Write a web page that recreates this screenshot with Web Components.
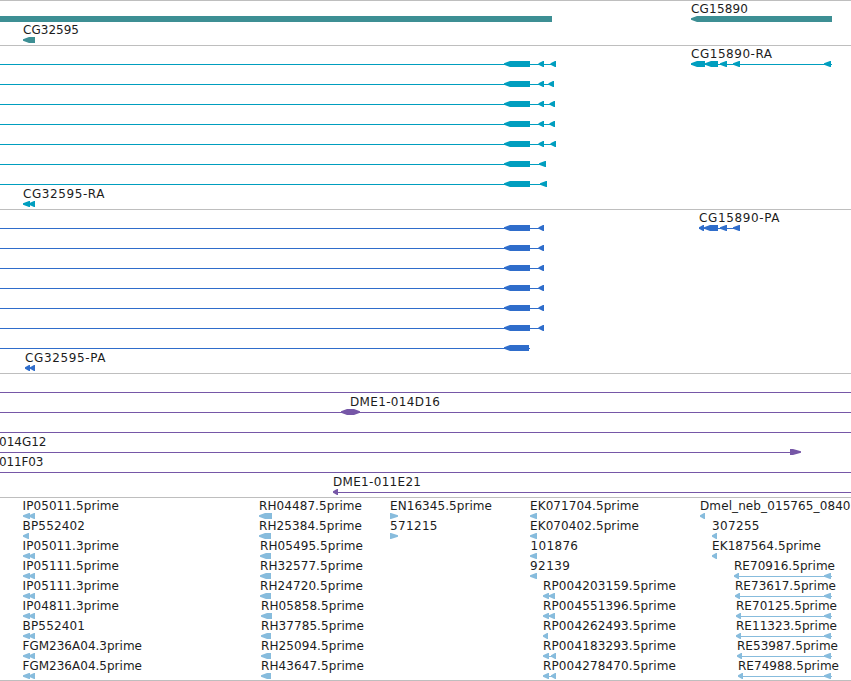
<!DOCTYPE html>
<html lang="en">
<head>
<meta charset="utf-8">
<title>Genome browser</title>
<style>
    html, body {
        margin: 0;
        background: #fff;
        overflow: hidden;
    }
</style>
</head>
<body>
<genome-view></genome-view>

<script>
const SVG = "http://www.w3.org/2000/svg";

// bar box inside a row: top, bottom, and the middle of the blunt arrow tip
const TOP = 13;
const BOTTOM = 19;
const TIP = 16;
const BLUNT = 0.8;

// label: [x, right edge, text]
// line:  [from, to]
// exon:  [from, to, direction], direction is "l" by default, "r", "b" (both) or "n" (none)
function repeat(n, row) {
    return Array.from({length: n}, () => row);
}

function rnaRow(...last) {
    return {lines: [[0, last[last.length - 1][0] + 2]], exons: [[504, 530], ...last]};
}

const pair = [[23, 30], [29, 35]];

function estRow(...parts) {
    let row = {labels: [], lines: [], exons: []};
    parts.forEach((p) => {
        row.labels.push(p.label);
        row.exons.push(...p.exons);
        if(p.line) row.lines.push(p.line);
    });
    return row;
}

function est(x, right, text, exons, line) {
    return {label: [x, right, text], exons, line};
}

function re(x, text) {
    return est(x, x + 101, text, [[x, x + 5], [824, 831]], [x + 1, 832]);
}

const tracks = [
    {color: "#3d8f94", rows: [
        {height: 21, labels: [[691, 748, "CG15890"]], exons: [[0, 552, "n"], [691, 832]]},
        {labels: [[23, 79, "CG32595"]], exons: [[23, 35]]}
    ]},
    {color: "#009ebf", rows: [
        {
            labels: [[691, 772, "CG15890-RA"]],
            lines: [[0, 552], [691, 832]],
            exons: [[504, 530], [538.5, 544], [550.5, 556], [691, 705], [705, 718], [720, 727], [733, 740], [824, 831]]
        },
        rnaRow([538.5, 544], [548.5, 554]),
        rnaRow([538.5, 544], [549.5, 555]),
        rnaRow([538.5, 544], [549.5, 555]),
        rnaRow([538.5, 544], [550.5, 556]),
        rnaRow([539, 546]),
        rnaRow([540, 547]),
        {labels: [[23, 104.5, "CG32595-RA"]], exons: pair}
    ]},
    {color: "#2f6dcb", rows: [
        {
            labels: [[699, 779.5, "CG15890-PA"]],
            lines: [[0, 541], [699, 740]],
            exons: [[504, 530], [538.5, 544], [699, 704], [704, 718], [720, 727], [733, 740]]
        },
        ...repeat(5, rnaRow([538.5, 544])),
        {lines: [[0, 530]], exons: [[504, 529]]},
        {labels: [[25, 105.5, "CG32595-PA"]], exons: [[25, 30], [30, 35]]}
    ]},
    {color: "#7657a7", rows: [
        {lines: [[0, 851]]},
        {labels: [[350, 440, "DME1-014D16"]], lines: [[0, 851]], exons: [[341, 360, "b"]]},
        {lines: [[0, 851]]},
        {labels: [[-1, 46.5, "014G12"]], lines: [[0, 791]], exons: [[790, 801, "r"]]},
        {labels: [[-1, 43.5, "011F03"]], lines: [[0, 851]]},
        {labels: [[333, 421, "DME1-011E21"]], lines: [[335, 851]], exons: [[333, 338]]}
    ]},
    {color: "#87bcdd", rows: [
        estRow(
            est(22.5, 119, "IP05011.5prime", pair),
            est(259, 362, "RH04487.5prime", [[259, 272]]),
            est(390, 492, "EN16345.5prime", [[390, 398, "r"]]),
            est(530, 639, "EK071704.5prime", [[530, 537]]),
            est(700, 850.5, "Dmel_neb_015765_0840", [[700, 705]])
        ),
        estRow(
            est(22.5, 85, "BP552402", [[23, 29]]),
            est(259, 362, "RH25384.5prime", [[259, 271]]),
            est(390, 437.5, "571215", [[390, 398, "r"]]),
            est(530, 639, "EK070402.5prime", [[530, 537]]),
            est(712, 759.5, "307255", [[712, 717]])
        ),
        estRow(
            est(22.5, 119, "IP05011.3prime", pair),
            est(260, 363, "RH05495.5prime", [[260, 271]]),
            est(530.5, 578, "101876", [[530, 537]]),
            est(712, 821, "EK187564.5prime", [[712, 717]])
        ),
        estRow(
            est(22.5, 119, "IP05111.5prime", pair),
            est(260, 363, "RH32577.5prime", [[260, 271]]),
            est(530, 570, "92139", [[530, 537]]),
            re(734, "RE70916.5prime")
        ),
        estRow(
            est(22.5, 119, "IP05111.3prime", pair),
            est(260, 363, "RH24720.5prime", [[260, 271]]),
            est(543, 676, "RP004203159.5prime", [[543, 549], [549, 555]], [545, 554]),
            re(735, "RE73617.5prime")
        ),
        estRow(
            est(22.5, 119, "IP04811.3prime", pair),
            est(261, 364, "RH05858.5prime", [[261, 272]]),
            est(543, 676, "RP004551396.5prime", [[543, 549], [549, 555]], [545, 554]),
            re(736, "RE70125.5prime")
        ),
        estRow(
            est(22.5, 85, "BP552401", pair),
            est(261, 364, "RH37785.5prime", [[261, 271]]),
            est(543, 676, "RP004262493.5prime", [[543, 548]]),
            re(736, "RE11323.5prime")
        ),
        estRow(
            est(22.5, 142, "FGM236A04.3prime", pair),
            est(261, 364, "RH25094.5prime", [[261, 271]]),
            est(543, 676, "RP004183293.5prime", [[543, 549], [551, 556]], [545, 555]),
            re(737, "RE53987.5prime")
        ),
        estRow(
            est(22.5, 142, "FGM236A04.5prime", pair),
            est(261, 364, "RH43647.5prime", [[261, 271]]),
            est(543, 676, "RP004278470.5prime", [[543, 549], [551, 556]], [545, 555]),
            re(738, "RE74988.5prime")
        )
    ]}
];

class FeatureRow extends HTMLElement{
    constructor() {
        super();
        this.shadow = this.attachShadow({mode: "open"});
    }

    set data(row) {
        let height = row.height || 20;
        this.shadow.innerHTML = `
        <style>
            :host {
                display: block;
                height: ${height}px;
            }

            svg {
                display: block;
                width: 851px;
                height: 100%;
                overflow: visible;
                fill: var(--track-color);
            }

            rect {
                shape-rendering: crispEdges;
            }

            text {
                fill: #1c1c1c;
                font: 12px "DejaVu Sans", sans-serif;
            }
        </style>
        `
        this.svg = document.createElementNS(SVG, "svg");

        (row.lines || []).forEach(([from, to]) => {
            this.add("rect", {x: from, y: 16, width: to - from, height: 1});
        });
        (row.exons || []).forEach(([from, to, direction]) => {
            this.add("polygon", {points: this.outline(from, to, direction || "l")});
        });
        (row.labels || []).forEach(([x, right, text]) => {
            this.add("text", {x: x, y: 10, textLength: right - x}).textContent = text;
        });

        this.shadow.appendChild(this.svg);
    }

    add(name, attributes) {
        let node = document.createElementNS(SVG, name);
        for(let key in attributes){
            node.setAttribute(key, attributes[key]);
        }
        this.svg.appendChild(node);
        return node;
    }

    outline(from, to, direction) {
        let left = direction == "l" || direction == "b";
        let right = direction == "r" || direction == "b";
        let length = to - from;
        // short exons keep a sliver of body behind the head
        let head = Math.min(direction == "r" ? 8 : 6, length - 1);
        let a = left ? from + head : from;
        let b = right ? to - head : to;
        let points = [[a, TOP], [b, TOP]];

        if(right) points.push([to, TIP - BLUNT], [to, TIP + BLUNT]);
        points.push([b, BOTTOM], [a, BOTTOM]);
        if(left) points.push([from, TIP + BLUNT], [from, TIP - BLUNT]);
        return points.join(" ");
    }
}

class GenomeTrack extends HTMLElement{
    constructor() {
        super();
        this.attachShadow({mode: "open"}).innerHTML = `
        <style>
            :host {
                display: flex;
                flex-direction: column;
                border-top: 1px solid #bebebe;
                padding: 2px 0 1px;
            }

            :host(:last-of-type) {
                padding-bottom: 0;
                border-bottom: 1px solid #bebebe;
            }
        </style>
        <slot></slot>
        `
    }
}

class GenomeView extends HTMLElement{
    constructor() {
        super();
        this.shadow = this.attachShadow({mode: "open"});
    }

    connectedCallback() {
        this.shadow.innerHTML = `
        <style>
            :host {
                display: flex;
                flex-direction: column;
                width: 851px;
                height: 681px;
                overflow: hidden;
            }
        </style>
        `
        tracks.forEach((track) => {
            let element = document.createElement("genome-track");
            element.style.setProperty("--track-color", track.color);
            track.rows.forEach((data) => {
                let row = document.createElement("feature-row");
                row.data = data;
                element.appendChild(row);
            });
            this.shadow.appendChild(element);
        });
    }
}

customElements.define("feature-row", FeatureRow);
customElements.define("genome-track", GenomeTrack);
customElements.define("genome-view", GenomeView);
</script>
</body>
</html>
